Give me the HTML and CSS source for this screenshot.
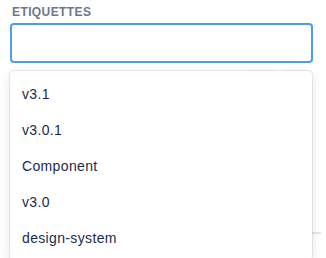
FILE: index.html
```html
<!DOCTYPE html>
<html lang="fr">
<head>
<meta charset="UTF-8" />
<meta name="viewport" content="width=device-width, initial-scale=1" />
<title>Etiquettes</title>
<link rel="stylesheet" href="styles.css">
</head>
<body>

<div class="field">
  <label class="field-label" for="tags">ETIQUETTES</label>
  <div class="select">
    <input type="text" id="tags" class="select-input" autocomplete="off" />
    <ul class="menu" role="listbox">
      <li class="option">v3.1</li>
      <li class="option">v3.0.1</li>
      <li class="option">Component</li>
      <li class="option">v3.0</li>
      <li class="option">design-system</li>
    </ul>
  </div>
  <div class="actions">
    <span class="btn"></span>
    <span class="btn"></span>
  </div>
  <div class="divider"></div>
</div>

</body>
</html>
```

FILE: styles.css
```css
html, body {
  height: 100%;
}
body {
  margin: 0;
  min-height: 258px;
  overflow: hidden;
  background-color: #fff;
  color: #172b4d;
  font-family: "Liberation Sans", Arial, sans-serif;
  font-size: 14px;
}
.field {
  width: 303px;
  padding: 4px 0 0 10px;
}
.field-label {
  display: block;
  padding-left: 2px;
  font-size: 12px;
  font-weight: bold;
  line-height: 16px;
  letter-spacing: 0.4px;
  color: #6b778c;
  margin-bottom: 3px;
}

/* champ + menu */
.select {
  position: relative;
}
.select-input {
  display: block;
  box-sizing: border-box;
  width: 100%;
  height: 40px;
  margin: 0;
  border: 2px solid #4c9aff;
  border-radius: 4px;
  background: #fff;
  outline: none;
}
.menu {
  position: absolute;
  top: 48px;
  left: 0;
  right: 1px;
  margin: 0;
  padding: 5px 0 4px;
  list-style: none;
  background: #fff;
  border-radius: 4px;
  box-shadow: 0 0 0 1px rgba(9, 30, 66, 0.08), 0 4px 11px rgba(9, 30, 66, 0.12);
  z-index: 2;
}
.option {
  height: 36px;
  line-height: 36px;
  padding: 0 12px;
  color: #172b4d;
  letter-spacing: 0.35px;
}

/* boutons sous le menu */
.actions {
  display: flex;
  justify-content: flex-end;
  gap: 4px;
  margin-top: 7px;
  padding-right: 1px;
}
.btn {
  width: 31px;
  height: 32px;
  border-radius: 4px;
  background: #f4f5f7;
}
.divider {
  height: 2px;
  margin: 130px -8px 0 0;
  background: #e6e7eb;
}
```
